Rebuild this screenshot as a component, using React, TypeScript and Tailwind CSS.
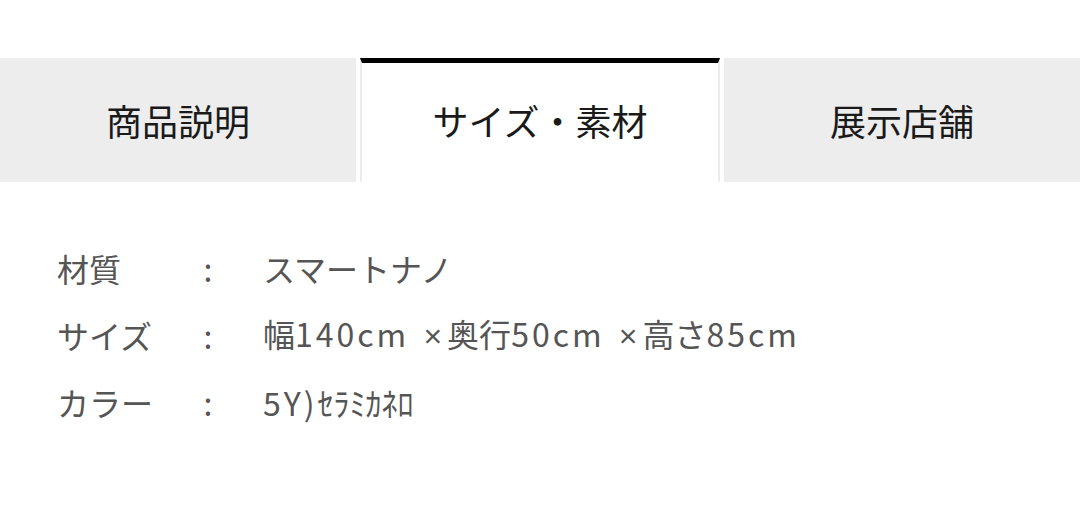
const tabs = ['商品説明', 'サイズ・素材', '展示店舗'];

const specs = [
  { label: '材質', value: 'スマートナノ' },
  { label: 'サイズ', value: '幅140cm ×奥行50cm ×高さ85cm' },
  { label: 'カラー', value: '5Y)ｾﾗﾐｶﾈﾛ' },
];

// latin runs are set a little wider than the CJK font draws them
function Value({ text }: { text: string }) {
  const parts = text.split(/([\x20-\x7e]+|×)/).filter(Boolean);
  return (
    <span className="ml-[39px]">
      {parts.map((p, i) =>
        p === '×' ? (
          <span key={i} className="font-['Liberation_Sans'] pl-[4px] pr-[5px]">
            ×
          </span>
        ) : /^[\x20-\x7e]+$/.test(p) ? (
          <span key={i} className="tracking-[3px]">
            {p}
          </span>
        ) : (
          <span key={i}>{p}</span>
        )
      )}
    </span>
  );
}

export default function App() {
  const active = 1;
  return (
    <div
      className="w-[1080px] h-[520px] bg-white pt-[58px]"
      style={{ fontFamily: '"Noto Sans CJK JP", "Noto Sans", sans-serif' }}
    >
      {/* Tabs */}
      <div className="flex gap-[4px] h-[124px]">
        {tabs.map((t, i) => (
          <div
            key={t}
            className={
              i === active
                ? 'flex-1 flex items-center justify-center bg-white border-t-[5px] border-t-black border-x-2 border-x-[#ececec] text-[36px] text-[#1a1a1a]'
                : 'flex-1 flex items-center justify-center bg-[#ededed] text-[36px] text-[#1a1a1a]'
            }
          >
            <span className={i === active ? '-mt-[5px]' : ''}>{t}</span>
          </div>
        ))}
      </div>

      {/* Spec list */}
      <div className="pt-[52px] pl-[57px] text-[32px] text-[#555]">
        {specs.map((s) => (
          <div key={s.label} className="flex items-center h-[67px]">
            <span className="w-[135px]">{s.label}</span>
            <span className="w-[32px] text-center">:</span>
            <Value text={s.value} />
          </div>
        ))}
      </div>
    </div>
  );
}
